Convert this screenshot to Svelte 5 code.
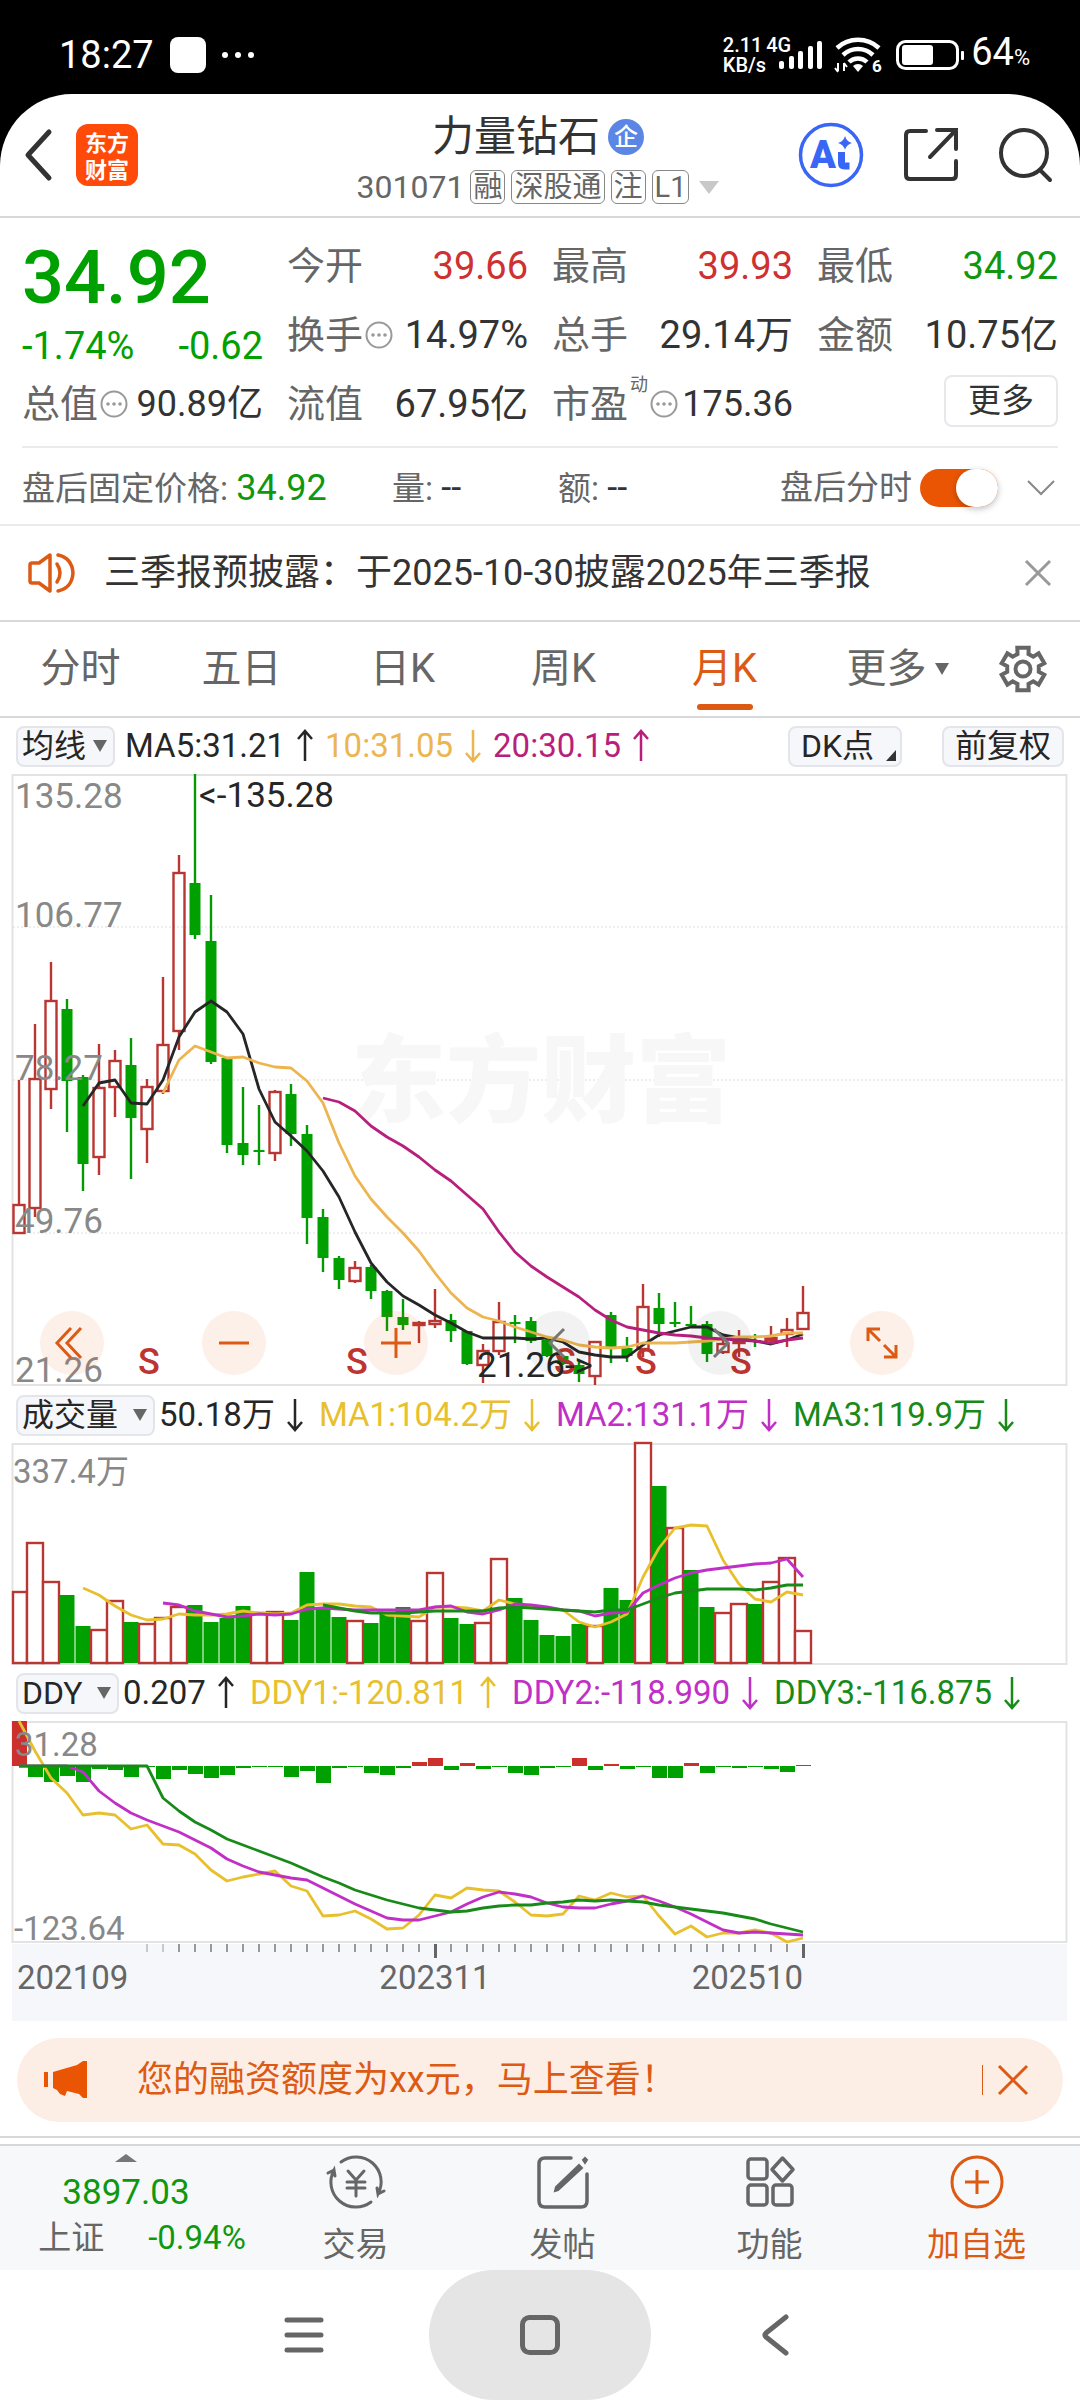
<script lang="ts">
	type Candle = [up: number, high: number, top: number, bottom: number, low: number];

	// Months are evenly spaced, the first one sits half a slot from the frame
	const STEP = 16;
	const xAt = (i: number) => 19 + i * STEP;

	// [rising, high, body top, body bottom, low]
	const candles: Candle[] = [
		[1, 306, 431, 459, 459], [1, 250, 305, 434, 443], [1, 188, 227, 315, 335], [0, 225, 235, 307, 358],
		[0, 301, 303, 390, 417], [1, 270, 314, 383, 401], [1, 276, 287, 313, 343], [0, 264, 291, 344, 405],
		[1, 305, 313, 355, 389], [1, 203, 271, 317, 320], [1, 81, 99, 257, 276], [0, 0, 109, 161, 165],
		[0, 121, 167, 288, 290], [0, 284, 284, 371, 379], [0, 313, 369, 381, 391], [0, 331, 376, 378, 391],
		[1, 316, 318, 379, 387], [0, 310, 320, 360, 372], [0, 351, 360, 444, 470], [0, 435, 443, 484, 498],
		[0, 482, 484, 506, 515], [1, 487, 494, 507, 509], [0, 491, 493, 517, 525], [0, 516, 517, 543, 557],
		[0, 525, 543, 551, 556], [1, 547, 549, 551, 569], [1, 515, 547, 550, 554], [0, 540, 546, 557, 568],
		[0, 557, 557, 590, 591], [1, 570, 577, 591, 609], [1, 528, 548, 577, 581], [0, 541, 548, 550, 569],
		[0, 543, 547, 567, 569], [0, 565, 566, 582, 583], [0, 581, 582, 590, 591], [0, 588, 591, 600, 608],
		[1, 567, 568, 602, 611], [0, 538, 541, 574, 589], [0, 563, 574, 582, 588], [1, 510, 533, 575, 583],
		[0, 519, 534, 550, 563], [0, 528, 548, 550, 553], [0, 532, 550, 552, 553], [0, 547, 550, 580, 588],
		[1, 563, 570, 578, 580], [1, 556, 568, 569, 583], [0, 560, 566, 568, 573], [1, 552, 564, 566, 568],
		[1, 544, 556, 560, 573], [1, 512, 539, 555, 555]
	];

	const priceLines = [
		{ color: '#262626', start: 4, ys: [332, 309, 306, 329, 330, 306, 263, 238, 227, 238, 260, 315, 348, 362, 377, 397, 423, 458, 489, 508, 522, 531, 541, 549, 558, 564, 564, 564, 565, 564, 568, 578, 581, 583, 583, 571, 561, 557, 553, 553, 561, 564, 567, 570, 566, 560] },
		{ color: '#ecb550', start: 9, ys: [319, 286, 272, 278, 284, 283, 289, 293, 294, 307, 329, 369, 402, 425, 443, 459, 477, 499, 519, 534, 543, 547, 553, 558, 563, 566, 571, 573, 574, 573, 569, 569, 569, 568, 567, 565, 563, 563, 562, 559, 559] },
		{ color: '#b81f7c', start: 19, ys: [324, 328, 337, 352, 363, 372, 383, 396, 407, 421, 435, 458, 478, 492, 503, 513, 523, 536, 546, 553, 556, 559, 561, 562, 564, 565, 566, 567, 569, 566, 564] }
	];

	const volumes = [
		149, 100, 139, 152, 183, 187, 158, 179, 181, 175, 164, 162, 179, 175, 163, 170, 169, 177, 129, 164, 174, 178, 180, 170, 164,
		178, 130, 175, 181, 180, 116, 155, 177, 192, 193, 181, 183, 145, 157, 0, 43, 85, 127, 164, 170, 161, 161, 139, 115, 188
	];
	const risingVolumes = [0, 1, 2, 5, 6, 8, 9, 10, 15, 16, 21, 25, 26, 29, 30, 36, 39, 41, 44, 45, 47, 48, 49];

	const volumeLines = [
		{ color: '#e8c02d', start: 4, ys: [145, 152, 163, 172, 177, 176, 171, 172, 172, 171, 168, 170, 171, 170, 162, 161, 161, 163, 164, 172, 173, 174, 164, 164, 165, 168, 157, 161, 164, 165, 167, 179, 184, 179, 171, 134, 105, 85, 82, 83, 117, 141, 156, 159, 149, 152] },
		{ color: '#c02fc6', start: 9, ys: [160, 162, 168, 171, 174, 173, 171, 172, 171, 166, 165, 166, 167, 167, 167, 167, 167, 164, 163, 169, 171, 167, 161, 162, 164, 167, 168, 173, 170, 169, 150, 142, 135, 130, 127, 125, 123, 121, 120, 116, 134] },
		{ color: '#188a18', start: 19, ys: [162, 165, 168, 170, 170, 170, 169, 168, 168, 168, 168, 165, 164, 165, 166, 167, 168, 169, 167, 167, 161, 155, 150, 148, 146, 146, 146, 147, 145, 142, 142] }
	];

	// Positive bars hang below the zero line
	const DDY_ZERO = 45;
	const ddyBars = [
		-45, 11, 16, 10, 16, 3, 4, 11, 1, 13, 4, 8, 12, 9, 2, 1, 1, 11, 5, 17, 2, 1, 7, 9, 2,
		-4, -8, 4, -3, 3, 1, 7, 9, 2, 1, -8, 4, -2, 3, 1, 12, 12, -3, 7, 1, 2, 1, 3, 6, -1
	];

	const ddyLines = [
		{ color: '#e8c02d', start: 0, ys: [0, 30, 57, 72, 94, 92, 94, 108, 104, 123, 124, 133, 149, 160, 156, 153, 150, 165, 170, 195, 194, 190, 198, 208, 207, 194, 174, 177, 167, 169, 170, 181, 194, 195, 193, 175, 179, 172, 176, 175, 195, 213, 205, 216, 212, 212, 209, 212, 221, 217] },
		{ color: '#c02fc6', start: 0, ys: [45, 45, 45, 45, 51, 70, 82, 92, 99, 105, 111, 119, 127, 138, 145, 151, 154, 157, 159, 167, 175, 183, 190, 197, 199, 199, 195, 191, 183, 176, 171, 173, 176, 182, 186, 187, 187, 183, 180, 175, 180, 186, 193, 201, 209, 212, 211, 212, 213, 214] },
		{ color: '#188a18', start: 0, ys: [45, 45, 45, 45, 45, 45, 45, 45, 45, 77, 90, 101, 109, 118, 124, 130, 136, 142, 149, 156, 162, 169, 174, 179, 183, 187, 189, 191, 190, 187, 185, 184, 184, 182, 181, 179, 180, 179, 180, 181, 184, 186, 188, 190, 192, 195, 198, 203, 207, 211] }
	];

	const priceLabels = [
		{ y: 34, text: '135.28' },
		{ y: 153, text: '106.77' },
		{ y: 306, text: '78.27' },
		{ y: 459, text: '49.76' },
		{ y: 608, text: '21.26' }
	];
	const sellMarks = [149, 357, 565, 646, 741];
	const ticks = Array.from({ length: 42 }, (_, i) => i + 8);

	const toPoints = (line: { start: number; ys: number[] }) =>
		line.ys.map((y, i) => `${xAt(line.start + i)},${y}`).join(' ');

	const quotes = [
		{ label: '今开', value: '39.66', tone: 'up' },
		{ label: '最高', value: '39.93', tone: 'up' },
		{ label: '最低', value: '34.92', tone: 'down' },
		{ label: '换手', value: '14.97%', info: true },
		{ label: '总手', value: '29.14万' },
		{ label: '金额', value: '10.75亿' }
	];

	const tabs = ['分时', '五日', '日K', '周K', '月K', '更多'];
	let activeTab = $state('月K');
	let afterHours = $state(true);

	const maLegend = [
		{ text: 'MA5:31.21', up: true, color: '#262626' },
		{ text: '10:31.05', up: false, color: '#ecb550' },
		{ text: '20:30.15', up: true, color: '#b81f7c' }
	];
	const volumeLegend = [
		{ text: '50.18万', up: false, color: '#262626' },
		{ text: 'MA1:104.2万', up: false, color: '#e8c02d' },
		{ text: 'MA2:131.1万', up: false, color: '#c02fc6' },
		{ text: 'MA3:119.9万', up: false, color: '#188a18' }
	];
	const ddyLegend = [
		{ text: '0.207', up: true, color: '#262626' },
		{ text: 'DDY1:-120.811', up: true, color: '#e8c02d' },
		{ text: 'DDY2:-118.990', up: false, color: '#c02fc6' },
		{ text: 'DDY3:-116.875', up: false, color: '#188a18' }
	];

	// Six-toothed cog outline
	const cog = Array.from({ length: 6 }, (_, k) =>
		[[16, -20], [22, -15], [22, 15], [16, 20]]
			.map(([r, d]) => {
				const a = ((k * 60 - 90 + d) * Math.PI) / 180;
				return `${(24 + r * Math.cos(a)).toFixed(1)},${(24 + r * Math.sin(a)).toFixed(1)}`;
			})
			.join(' ')
	).join(' ');
</script>

{#snippet legend(items: { text: string; up: boolean; color: string }[])}
	{#each items as item}
		<span class="legend" style="color: {item.color}">
			{item.text}
			<svg width="16" height="32" viewBox="0 0 16 32" fill="none" stroke="currentColor" stroke-width="2.5">
				{#if item.up}
					<path d="M8 31V1M1 9l7-8 7 8" />
				{:else}
					<path d="M8 0v31M1 23l7 8 7-8" />
				{/if}
			</svg>
		</span>
	{/each}
{/snippet}

{#snippet info()}
	<svg class="info" width="28" height="28" viewBox="0 0 28 28" fill="none">
		<circle cx="14" cy="14" r="12.5" stroke="#999" stroke-width="2" />
		<g fill="#999"><circle cx="8" cy="14" r="1.8" /><circle cx="14" cy="14" r="1.8" /><circle cx="20" cy="14" r="1.8" /></g>
	</svg>
{/snippet}

{#snippet picker(name: string, gap: string)}
	<span class="picker {gap}">
		<select aria-label={name}><option>{name}</option></select>
		<svg width="14" height="12" viewBox="0 0 14 12"><path d="M0 0h14L7 12z" fill="#666" /></svg>
	</span>
{/snippet}

{#snippet plot(lines: { color: string; start: number; ys: number[] }[])}
	{#each lines as line}
		<polyline points={toPoints(line)} fill="none" stroke={line.color} stroke-width="2.8" stroke-linejoin="round" />
	{/each}
{/snippet}

<div class="screen">
	<div class="status">
		<span class="clock">18:27</span>
		<svg width="84" height="36" viewBox="0 0 84 36" fill="#fff">
			<rect width="36" height="36" rx="8" />
			<circle cx="55" cy="18" r="3" /><circle cx="68" cy="18" r="3" /><circle cx="81" cy="18" r="3" />
		</svg>
		<span class="speed"><span>2.11</span><span>KB/s</span></span>
		<span class="network">4G</span>
		<svg class="bars" width="44" height="28" viewBox="0 0 44 28" fill="#fff">
			<rect y="20" width="5" height="8" rx="2" /><rect x="10" y="15" width="5" height="13" rx="2" />
			<rect x="19" y="10" width="5" height="18" rx="2" /><rect x="29" y="5" width="5" height="23" rx="2" />
			<rect x="38" width="5" height="28" rx="2" />
		</svg>
		<svg class="wifi" width="48" height="36" viewBox="0 0 48 36" fill="none" stroke="#fff">
			<path d="M2 11a31 31 0 0 1 42 0M8 18a22 22 0 0 1 30 0M14 25a13 13 0 0 1 18 0" stroke-width="4.5" />
			<path d="M18 29l5 6 5-6a7 7 0 0 0-10 0z" fill="#fff" stroke="none" />
			<path d="M3 26v8M0 31l3 4M9 34v-8M12 30l-3-4" stroke-width="2" />
			<text x="37" y="35" font-size="17" fill="#fff" stroke="none" font-weight="700">6</text>
		</svg>
		<svg class="battery" width="68" height="30" viewBox="0 0 68 30">
			<rect x="1.5" y="1.5" width="60" height="27" rx="8" fill="none" stroke="#fff" stroke-width="3" />
			<rect x="6" y="5" width="31" height="20" rx="3" fill="#fff" />
			<rect x="65" y="11" width="3" height="9" rx="1" fill="#fff" />
		</svg>
		<span class="level">64<small>%</small></span>
	</div>

	<main>
		<header>
			<div class="left">
				<button aria-label="返回">
					<svg width="28" height="52" viewBox="0 0 28 52" fill="none" stroke="#333" stroke-width="5" stroke-linecap="round" stroke-linejoin="round"><path d="M25 3L4 26l21 23" /></svg>
				</button>
				<span class="logo"><span>东方</span><span>财富</span></span>
			</div>
			<div class="title">
				<h1>力量钻石 <span class="badge">企</span></h1>
				<p>301071 <b>融</b><b>深股通</b><b>注</b><b>L1</b>
					<svg width="20" height="13" viewBox="0 0 20 13"><path d="M0 0h20L10 13z" fill="#c8c8c8" /></svg>
				</p>
			</div>
			<div class="right">
				<button aria-label="Ai">
					<svg width="66" height="66" viewBox="0 0 66 66">
						<circle cx="33" cy="33" r="30.5" fill="#fff" stroke="#3a66f5" stroke-width="3.5" />
						<text x="12" y="46" font-size="38" font-weight="900" fill="#3a66f5">A</text>
						<path d="M43.5 30v11q0 3 3 3h5" fill="none" stroke="#3a66f5" stroke-width="7" />
						<path d="M47 14q1.500 5.500 7 7-5.500 1.500-7 7-1.500-5.500-7-7 5.500-1.500 7-7z" fill="#3a66f5" />
					</svg>
				</button>
				<button aria-label="分享">
					<svg width="54" height="54" viewBox="0 0 54 54" fill="none" stroke="#333" stroke-width="4" stroke-linecap="round">
						<path d="M22 3H6q-4 0-4 4v40q0 4 4 4h42q4 0 4-4V33" /><path d="M33 2h19v19M52 2L26 29" />
					</svg>
				</button>
				<button aria-label="搜索">
					<svg width="54" height="54" viewBox="0 0 54 54" fill="none" stroke="#333" stroke-width="4" stroke-linecap="round">
						<circle cx="26" cy="25" r="23" /><path d="M42 42l10 10" />
					</svg>
				</button>
			</div>
		</header>

		<section class="quotes">
			<div class="price">
				<strong>34.92</strong>
				<p><span>-1.74%</span><span>-0.62</span></p>
			</div>
			{#each quotes as quote}
				<div class="quote {quote.tone ?? ''}">
					<span>{quote.label}</span>
					{#if quote.info}{@render info()}{/if}
					<em>{quote.value}</em>
				</div>
			{/each}
			<div class="quote"><span>总值</span>{@render info()}<em class="tight">90.89亿</em></div>
			<div class="quote"><span>流值</span><em>67.95亿</em></div>
			<div class="quote"><span>市盈</span><sup>动</sup>{@render info()}<em class="tight">175.36</em></div>
			<div class="quote"><button class="more">更多</button></div>
		</section>

		<section class="after">
			<span>盘后固定价格: <em class="down">34.92</em></span>
			<span>量: <em>--</em></span>
			<span>额: <em>--</em></span>
			<label>盘后分时 <input type="checkbox" bind:checked={afterHours} /></label>
			<button class="expand" aria-label="展开">
				<svg width="28" height="16" viewBox="0 0 28 16" fill="none" stroke="#888" stroke-width="2"><path d="M1 1l13 13L27 1" /></svg>
			</button>
		</section>

		<section class="notice">
			<svg width="48" height="40" viewBox="0 0 48 40" fill="none" stroke="#dd5a14" stroke-width="3.5" stroke-linejoin="round" stroke-linecap="round">
				<path d="M2 12q0-2 2-2h7L22 2v36l-11-8H4q-2 0-2-2zM29 11q6 9 0 18M30 2q14 3 15 18-1 15-15 18" />
			</svg>
			<a href="#notice">三季报预披露：于2025-10-30披露2025年三季报</a>
			<button aria-label="关闭">
				<svg width="26" height="26" viewBox="0 0 26 26" stroke="#999" stroke-width="3"><path d="M1 1l24 24M25 1L1 25" /></svg>
			</button>
		</section>

		<nav class="tabs">
			{#each tabs as tab}
				<button class:active={activeTab === tab} class:menu={tab === '更多'} onclick={() => (activeTab = tab)}>
					{tab}
					{#if tab === '更多'}
						<svg width="14" height="12" viewBox="0 0 14 12"><path d="M0 0h14L7 12z" fill="#666" /></svg>
					{/if}
				</button>
			{/each}
			<button aria-label="设置">
				<svg width="48" height="48" viewBox="0 0 48 48" fill="none" stroke="#666" stroke-width="4">
					<polygon points={cog} /><circle cx="24" cy="24" r="7.5" />
				</svg>
			</button>
		</nav>

		<div class="bar ma">
			{@render picker('均线', 'near')}
			{@render legend(maLegend)}
			<button class="chip dk">DK点
				<svg width="10" height="11" viewBox="0 0 10 11"><path d="M10 0v11H0z" fill="#333" /></svg>
			</button>
			<button class="chip">前复权</button>
		</div>

		<div class="chart">
			<svg viewBox="0 0 1080 613">
				<rect x="12.5" y="1" width="1054" height="610" fill="none" stroke="#e3e3e3" stroke-width="2" />
				{#each [153, 306, 459] as y}
					<line x1="13" x2="1066" y1={y} y2={y} stroke="#ddd" stroke-dasharray="2 2" />
				{/each}
				<text class="watermark" x="541" y="341" text-anchor="middle">东方财富</text>
				{#each candles as [up, high, top, bottom, low], i}
					{@const x = xAt(i)}
					{#if up}
						<g stroke="#b93632" stroke-width="2.4" fill="none">
							<path d="M{x} {high}V{top}M{x} {bottom}V{low}" />
							<rect x={x - 5.5} y={top} width="11" height={bottom - top} />
						</g>
					{:else}
						<path d="M{x} {high}V{low}" stroke="#049a04" stroke-width="2.4" />
						<rect x={x - 5.5} y={top} width="11" height={bottom - top} fill="#00a000" />
					{/if}
				{/each}
				{@render plot(priceLines)}
				{#each priceLabels as label}
					<text class="scale" x="15" y={label.y}>{label.text}</text>
				{/each}
				{#each sellMarks as x}
					<text class="sell" {x} y="600" text-anchor="middle">S</text>
				{/each}
				<text class="mark" x="199" y="33">&lt;-135.28</text>
				<text class="mark" x="477" y="603">21.26-&gt;</text>
			</svg>
			<div class="tools">
				<button aria-label="更早">
					<svg width="64" height="64" viewBox="0 0 64 64"><path d="M31 17L17 32l14 15M41 17L27 32l14 15" /></svg>
				</button>
				<button aria-label="缩小"><svg width="64" height="64" viewBox="0 0 64 64"><path d="M17 32h30" /></svg></button>
				<button aria-label="放大"><svg width="64" height="64" viewBox="0 0 64 64"><path d="M17 32h30M32 17v30" /></svg></button>
				<button class="muted" aria-label="左移"><svg width="64" height="64" viewBox="0 0 64 64"><path d="M38 18L24 32l14 14" /></svg></button>
				<button class="muted" aria-label="右移"><svg width="64" height="64" viewBox="0 0 64 64"><path d="M26 18l14 14-14 14" /></svg></button>
				<button aria-label="全屏">
					<svg width="64" height="64" viewBox="0 0 64 64"><path d="M18 30V18h12M18 18l12 12M34 34l12 12M46 34v12H34" /></svg>
				</button>
			</div>
		</div>

		<div class="bar">
			{@render picker('成交量', 'far')}
			{@render legend(volumeLegend)}
		</div>

		<div class="chart">
			<svg viewBox="0 0 1080 222">
				<rect x="12.5" y="1" width="1054" height="220" fill="none" stroke="#e3e3e3" stroke-width="2" />
				{#each volumes as y, i}
					{#if risingVolumes.includes(i)}
						<rect x={i ? xAt(i) - 8 : 13} {y} width={i ? 16 : 14} height={220 - y} fill="#fff" stroke="#b93632" stroke-width="2.4" />
					{:else}
						<rect x={xAt(i) - 7.5} {y} width="15" height={220 - y} fill="#00a000" />
					{/if}
				{/each}
				{@render plot(volumeLines)}
				<text class="scale small" x="13" y="40">337.4万</text>
			</svg>
		</div>

		<div class="bar">
			{@render picker('DDY', 'far')}
			{@render legend(ddyLegend)}
		</div>

		<div class="chart">
			<svg viewBox="0 0 1080 300">
				<rect x="12.5" y="1" width="1054" height="220" fill="none" stroke="#e3e3e3" stroke-width="2" />
				{#each ddyBars as h, i}
					<rect x={xAt(i) - 7} y={Math.min(DDY_ZERO, DDY_ZERO + h)} width="15" height={Math.abs(h)} fill={h > 0 ? '#00a000' : '#cc302c'} />
				{/each}
				{@render plot(ddyLines)}
				<text class="scale small" x="15" y="35">31.28</text>
				<text class="scale small" x="14" y="219">-123.64</text>
				<rect x="12" y="223" width="1055" height="77" fill="#f6f7fa" />
				{#each ticks as i}
					{@const major = i === 26 || i === 49}
					<rect x={xAt(i) - 1} y="223" width={major ? 3 : 2} height={major ? 14 : 8} fill={major ? '#666' : '#999'} opacity={i < 10 ? 0.5 : 1} />
				{/each}
				<text class="date" x="17" y="268">202109</text>
				<text class="date" x="435" y="268" text-anchor="middle">202311</text>
				<text class="date" x="803" y="268" text-anchor="end">202510</text>
			</svg>
		</div>

		<aside>
			<svg width="44" height="38" viewBox="0 0 44 38" fill="#ea5504">
				<path d="M0 11h4v15H0zM9 11l24-7 6-4h4v37h-4l-4-4-12-3-2 5-5-2-3-4-4-2z" />
			</svg>
			<a href="#credit">您的融资额度为xx元，马上查看！</a>
			<button aria-label="关闭提示">
				<svg width="30" height="30" viewBox="0 0 30 30" stroke="#dd5a14" stroke-width="3"><path d="M1 1l28 28M29 1L1 29" /></svg>
			</button>
		</aside>

		<footer>
			<button class="index">
				<svg width="22" height="8" viewBox="0 0 22 8"><path d="M11 0l11 8H0z" fill="#777" /></svg>
				<span class="points down">3897.03</span>
				<span class="change"><span>上证</span><span class="down">-0.94%</span></span>
			</button>
			<button>
				<svg width="60" height="56" viewBox="0 0 60 56" fill="none" stroke="#666" stroke-width="3" stroke-linecap="round">
					<path d="M15 8a25 25 0 0 1 37 32l-1-6M52 40l6-3M45 48A25 25 0 0 1 8 16l1 6M8 16l-6 3" />
					<path d="M22 17l8 9 8-9M30 26v16M21 28h18M21 34h18" />
				</svg>
				交易
			</button>
			<button>
				<svg width="52" height="56" viewBox="0 0 52 56" fill="none" stroke="#666" stroke-width="3.5" stroke-linecap="round">
					<path d="M34 4H8Q2 4 2 10v37q0 6 6 6h36q6 0 6-6V20" />
					<path d="M42 11l3 3-24 22-3 1 1-4zM46 6l2-2 2 2-2 3z" fill="#666" stroke-width="2" />
				</svg>
				发帖
			</button>
			<button>
				<svg width="52" height="56" viewBox="0 0 52 56" fill="none" stroke="#666" stroke-width="3.5" stroke-linejoin="round">
					<rect x="4" y="5" width="19" height="20" rx="3" /><rect x="4" y="31" width="19" height="20" rx="3" />
					<rect x="29" y="31" width="19" height="20" rx="3" /><path d="M38.5 4l10.5 11.5L38.5 27 28 15.5z" />
				</svg>
				功能
			</button>
			<button class="add">
				<svg width="56" height="56" viewBox="0 0 56 56" fill="none" stroke="#dd5a14" stroke-width="3">
					<circle cx="28" cy="28" r="25" /><path d="M16 28h24M28 16v24" />
				</svg>
				加自选
			</button>
		</footer>
	</main>

	<div class="system">
		<button aria-label="菜单">
			<svg width="40" height="40" viewBox="0 0 40 40" stroke="#666" stroke-width="5" stroke-linecap="round"><path d="M3 5h34M3 20h34M3 35h34" /></svg>
		</button>
		<button class="home" aria-label="主页">
			<svg width="42" height="42" viewBox="0 0 42 42" fill="none" stroke="#666" stroke-width="5"><rect x="3.5" y="3.5" width="35" height="35" rx="7" /></svg>
		</button>
		<button aria-label="后退">
			<svg width="40" height="42" viewBox="0 0 40 42" fill="none" stroke="#666" stroke-width="5" stroke-linecap="round" stroke-linejoin="round"><path d="M30 3L10 19q-2 2 0 4l20 16" /></svg>
		</button>
	</div>
</div>

<style>
	:global(body) { margin: 0; background: #fff; }

	.screen {
		background: #000;
		color: #333;
		font-family: Roboto, "Noto Sans CJK SC", sans-serif;
		font-size: 32px;
		line-height: 40px;
	}
	.screen * { box-sizing: border-box; }
	svg { display: block; flex-shrink: 0; overflow: visible; }
	h1, p { margin: 0; font-weight: 400; }
	em { font-style: normal; }
	button, select, input {
		margin: 0;
		padding: 0;
		border: none;
		background: none;
		color: inherit;
		font: inherit;
		cursor: pointer;
	}
	a { color: inherit; text-decoration: none; }
	.down { color: #0f980f; }

	/* phone status bar */
	.status {
		display: flex;
		align-items: center;
		height: 94px;
		padding: 16px 50px 0 59px;
		color: #fff;
	}
	.clock { margin-right: 16px; font-size: 38px; }
	.speed {
		display: flex;
		flex-direction: column;
		margin-left: auto;
		font-size: 20px;
		font-weight: 500;
		line-height: 20px;
	}
	.network { align-self: flex-start; padding-top: 19px; font-size: 20px; font-weight: 500; line-height: 20px; }
	.bars { margin-left: -12px; }
	.wifi { margin-left: 12px; }
	.battery { margin-left: 13px; }
	.level { margin-left: 7px; font-size: 38px; }
	.level small { font-size: 22px; }

	main {
		overflow: hidden;
		border-radius: 72px 72px 0 0;
		background: #fff;
	}

	header {
		display: grid;
		grid-template-columns: 1fr auto 1fr;
		align-items: center;
		height: 124px;
		padding: 0 28px 0 24px;
		border-bottom: 2px solid #d8d8d8;
	}
	.left, .right { display: flex; align-items: center; }
	.left { gap: 24px; }
	.right { justify-content: flex-end; gap: 40px; }
	.logo {
		display: flex;
		flex-direction: column;
		justify-content: center;
		width: 62px;
		height: 62px;
		border-radius: 12px;
		background: #ff4a0a;
		color: #fff;
		font-family: "Noto Sans CJK SC", sans-serif;
		font-size: 22px;
		font-weight: 700;
		line-height: 27px;
		text-align: center;
	}
	.title { padding-top: 10px; text-align: center; }
	h1 { display: flex; align-items: center; justify-content: center; gap: 8px; font-size: 42px; line-height: 46px; }
	.badge {
		width: 36px;
		height: 36px;
		border-radius: 50%;
		background: #5b86e5;
		color: #fff;
		font-size: 24px;
		font-weight: 500;
		line-height: 36px;
		text-align: center;
	}
	.title p {
		display: flex;
		align-items: center;
		justify-content: center;
		gap: 6px;
		margin-top: 8px;
		color: #666;
		line-height: 38px;
	}
	.title b {
		padding: 0 2px;
		border: 1px solid #888;
		border-radius: 6px;
		font-size: 29px;
		font-weight: 400;
		line-height: 32px;
	}
	.title p svg { margin-left: 4px; }

	.quotes {
		display: grid;
		grid-template-columns: repeat(4, 1fr);
		grid-auto-rows: 69px;
		column-gap: 24px;
		margin: 0 22px;
		padding: 13px 0 8px;
		border-bottom: 2px solid #ebebeb;
		font-size: 38px;
	}
	.price { grid-row: span 2; padding-top: 10px; color: #00a000; }
	.price strong { display: block; margin-bottom: 8px; font-size: 74px; font-weight: 500; line-height: 74px; }
	.price p { display: flex; justify-content: space-between; line-height: 46px; }
	.quote { display: flex; align-items: center; }
	.quote > span { color: #666; }
	.quote em { margin-left: auto; }
	.quote.up em { color: #cf3030; }
	.quote.down em { color: #0f980f; }
	.quote .tight { font-size: 36px; }
	.info { margin-left: 2px; }
	sup { align-self: flex-start; padding: 4px 0 0 2px; color: #666; font-size: 18px; line-height: 24px; }
	.more {
		width: 114px;
		height: 52px;
		margin: 0 0 5px auto;
		border: 2px solid #e6e8ec;
		border-radius: 8px;
		font-size: 33px;
		line-height: 46px;
	}

	.after {
		display: grid;
		grid-template-columns: 370fr 166fr 222fr auto auto;
		align-items: center;
		height: 78px;
		padding: 4px 25px 0 22px;
		border-bottom: 2px solid #ebebeb;
		color: #666;
		font-size: 33px;
	}
	.after em { color: #333; font-size: 36px; }
	.after em.down { color: #0f980f; }
	.after label { display: flex; align-items: center; gap: 8px; }
	.after input {
		width: 78px;
		height: 38px;
		border-radius: 19px;
		background: #ccc;
		appearance: none;
	}
	.after input::before {
		content: '';
		display: block;
		width: 42px;
		height: 38px;
		border-radius: 19px;
		background: #fff;
		box-shadow: 0 2px 6px rgba(0, 0, 0, 0.25);
	}
	.after input:checked { background: #ea5504; }
	.after input:checked::before { margin-left: 36px; }
	.expand { margin-left: 29px; }

	.notice {
		display: flex;
		align-items: center;
		height: 96px;
		padding: 0 29px 0 28px;
		border-bottom: 2px solid #d8d8d8;
		font-size: 36px;
	}
	.notice a { flex: 1; margin-left: 28px; }

	.tabs {
		display: grid;
		grid-template-columns: repeat(6, 1fr) 114px;
		height: 96px;
		border-bottom: 2px solid #d8d8d8;
		color: #666;
		font-size: 40px;
	}
	.tabs button { display: flex; align-items: center; justify-content: center; }
	.tabs .active { flex-direction: column; padding-top: 9px; color: #dd5a14; line-height: 70px; }
	.tabs .active::after {
		content: '';
		width: 56px;
		height: 6px;
		margin-bottom: 4px;
		border-radius: 3px;
		background: #dd5a14;
	}
	.tabs .menu { gap: 8px; padding-left: 24px; }

	.bar {
		display: flex;
		align-items: center;
		gap: 16px;
		height: 56px;
		padding: 0 16px;
		color: #262626;
		font-size: 33px;
	}
	.picker {
		display: flex;
		align-items: center;
		height: 41px;
		margin-right: -12px;
		padding-left: 4px;
		border: 2px solid #e3e5ea;
		border-radius: 8px;
		background: #f6f7fa;
	}
	.picker select { padding-right: 28px; font-size: 32px; line-height: 37px; appearance: none; }
	.picker svg { margin: 0 6px 0 -14px; pointer-events: none; }
	.picker.near select { padding-right: 20px; }
	.legend { display: flex; align-items: center; gap: 12px; white-space: nowrap; }
	.ma { gap: 12px; }
	.ma .picker { margin-right: -2px; }
	.chip {
		height: 41px;
		padding: 0 11px;
		border: 2px solid #e3e5ea;
		border-radius: 8px;
		background: #f6f7fa;
		font-size: 32px;
		line-height: 36px;
	}
	.dk { display: flex; gap: 12px; margin-left: auto; margin-right: 28px; padding-right: 4px; }
	.dk svg { align-self: flex-end; margin-bottom: 4px; }

	.chart { position: relative; }
	.chart > svg { width: 100%; height: auto; }
	.chart text { font-size: 35px; }
	.chart .scale { fill: #888; }
	.chart .small { font-size: 33px; }
	.chart .date { fill: #666; font-size: 33px; }
	.chart .mark { fill: #262626; }
	.chart .sell { fill: #bd3431; font-size: 36px; font-weight: 500; }
	.chart .watermark {
		fill: #f7f7f7;
		font-family: "Noto Sans CJK SC", sans-serif;
		font-size: 95px;
		font-weight: 900;
	}
	.tools {
		position: absolute;
		right: 166px;
		bottom: 12px;
		left: 40px;
		display: flex;
		justify-content: space-between;
	}
	.tools button { border-radius: 50%; background: rgba(235, 85, 5, 0.09); }
	.tools svg { fill: none; stroke: #dd5a14; stroke-width: 3; }
	.tools .muted { background: rgba(0, 0, 0, 0.05); }
	.tools .muted svg { stroke: #777; }

	aside {
		display: flex;
		align-items: center;
		height: 84px;
		margin: 17px 17px 22px;
		padding: 0 35px 0 27px;
		border-radius: 42px;
		background: #fceee5;
		color: #dd5a14;
		font-size: 36px;
	}
	aside a { flex: 1; margin-left: 49px; }
	aside button { padding-left: 15px; border-left: 1px solid #dd5a14; }

	footer {
		display: flex;
		height: 126px;
		border-top: 2px solid #d8d8d8;
		background: #f6f8fa;
		box-shadow: 0 -6px #fff, 0 -8px #d8d8d8;
		color: #666;
		font-size: 33px;
	}
	footer button {
		display: flex;
		flex: 1;
		flex-direction: column;
		align-items: center;
		justify-content: flex-start;
		gap: 15px;
		padding-top: 8px;
	}
	footer .index { flex: 0 0 252px; gap: 0; }
	.points { margin-top: 9px; font-size: 35px; line-height: 44px; }
	.change { display: flex; gap: 44px; padding-left: 32px; line-height: 46px; }
	footer .add { color: #dd5a14; }

	/* system navigation */
	.system {
		display: flex;
		align-items: center;
		justify-content: center;
		gap: 105px;
		height: 130px;
		background: #fff;
	}
	.home {
		display: flex;
		align-items: center;
		justify-content: center;
		width: 222px;
		height: 130px;
		border-radius: 65px;
		background: #e5e5e5;
	}
</style>
